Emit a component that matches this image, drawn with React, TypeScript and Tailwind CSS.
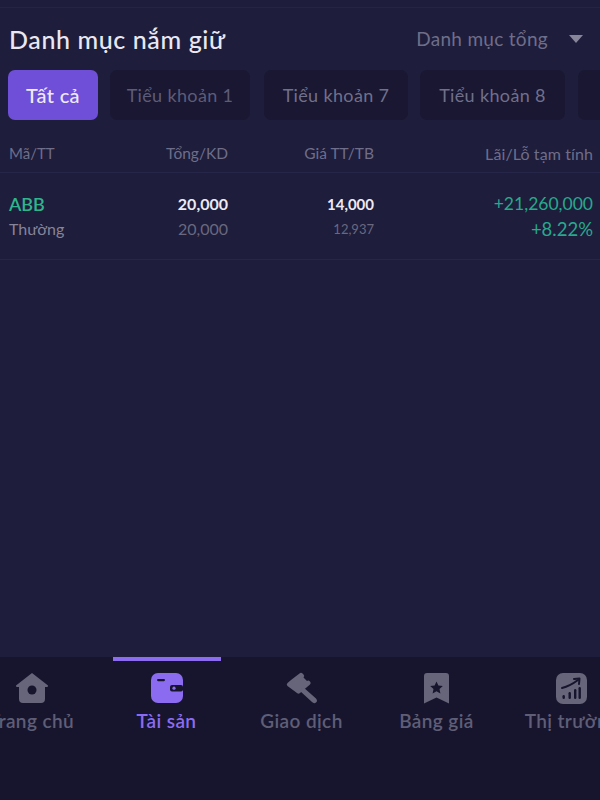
const font = { fontFamily: '"Lato", "Noto Sans", sans-serif' }

const tabs = ['Tiểu khoản 1', 'Tiểu khoản 7', 'Tiểu khoản 8']

function HomeIcon() {
  return (
    <svg width="34" height="32" viewBox="0 0 34 32">
      <path
        d="M17 1 L33 13.5 Q33.5 15 31.5 15 L30 15 L30 27 Q30 31 26 31 L8 31 Q4 31 4 27 L4 15 L2.5 15 Q0.5 15 1 13.5 Z"
        fill="#66657a"
      />
      <circle cx="17" cy="18" r="4.5" fill="#17152e" />
    </svg>
  )
}

function WalletIcon() {
  return (
    <svg width="32" height="30" viewBox="0 0 32 30">
      <rect x="0" y="0" width="32" height="30" rx="7" fill="#8b6cf0" />
      <rect x="6" y="6" width="8" height="2.2" rx="1.1" fill="#17152e" />
      <rect x="19" y="12" width="13" height="6.5" rx="2" fill="#17152e" />
      <circle cx="23" cy="15.2" r="1.6" fill="#8b6cf0" />
    </svg>
  )
}

function GavelIcon() {
  return (
    <svg width="32" height="32" viewBox="0 0 32 32">
      <path
        d="M13.5 1.5 Q15 0 16.5 1.5 L17.5 2.5 Q19 4 17.5 5.5 L18 6 L21 9 Q22.5 8 24 9.5 Q25.5 11 24 12.5 L14 21 Q12.5 22.5 11 21 L1.5 14 Q0 12.5 1.5 11 L5 8 Z"
        fill="#66657a"
      />
      <path d="M17 15 L30 26.5 Q32 29 30 30.5 Q28 32 26 30 L14 19 Z" fill="#66657a" />
    </svg>
  )
}

function BookmarkIcon() {
  return (
    <svg width="25" height="31" viewBox="0 0 25 31">
      <path
        d="M3 0 L22 0 Q25 0 25 3 L25 30.5 L12.5 24.5 L0 30.5 L0 3 Q0 0 3 0 Z"
        fill="#66657a"
      />
      <path
        d="M12.5 8.5 L14.4 12.6 L18.8 13.1 L15.5 16.1 L16.4 20.5 L12.5 18.3 L8.6 20.5 L9.5 16.1 L6.2 13.1 L10.6 12.6 Z"
        fill="#17152e"
      />
    </svg>
  )
}

function ChartIcon() {
  return (
    <svg width="31" height="31" viewBox="0 0 31 31">
      <rect x="0" y="0" width="31" height="31" rx="7" fill="#66657a" />
      <path d="M6 15 Q14 13 22 7" stroke="#17152e" strokeWidth="2" fill="none" strokeLinecap="round" />
      <path d="M18 6 L23.5 5.5 L23 11" stroke="#17152e" strokeWidth="2" fill="none" strokeLinecap="round" strokeLinejoin="round" />
      <rect x="6.5" y="22" width="2.4" height="4" rx="1.2" fill="#17152e" />
      <rect x="12.5" y="19" width="2.4" height="7" rx="1.2" fill="#17152e" />
      <rect x="18" y="16" width="2.4" height="10" rx="1.2" fill="#17152e" />
      <rect x="22.5" y="14" width="2.4" height="12" rx="1.2" fill="#17152e" />
    </svg>
  )
}

const navItems = [
  { label: 'Trang chủ', icon: <HomeIcon /> },
  { label: 'Tài sản', icon: <WalletIcon />, active: true },
  { label: 'Giao dịch', icon: <GavelIcon /> },
  { label: 'Bảng giá', icon: <BookmarkIcon /> },
  { label: 'Thị trường', icon: <ChartIcon /> },
]

export default function App() {
  return (
    <div className="w-[600px] h-[800px] overflow-hidden flex flex-col bg-[#1e1d3b]" style={font}>
      <div className="h-[8px] border-b border-[#24234a]" />

      {/* Heading */}
      <div className="flex items-center justify-between h-[62px] pl-[9px] pr-[17px]">
        <h1 className="text-[25px] leading-[32px] font-medium text-[#e9e8f2] tracking-[0.6px]">Danh mục nắm giữ</h1>
        <div className="flex items-center gap-[21px] text-[19px] tracking-[0.3px] text-[#6f6e8a]">
          <span>Danh mục tổng</span>
          <span className="w-0 h-0 border-x-[7.5px] border-x-transparent border-t-[8px] border-t-[#86859a]" />
        </div>
      </div>

      {/* Account tabs */}
      <div className="flex h-[50px] overflow-hidden pl-[8px] text-[18px] tracking-[0.35px]">
        <div className="shrink-0 w-[90px] rounded-[7px] bg-[#6f4fd8] text-[#eeeaf9] text-[20px] font-medium flex items-center justify-center mr-[12px]">
          Tất cả
        </div>
        <div className="shrink-0 w-[140px] rounded-[7px] bg-[#191732] text-[#5d5c78] flex items-center justify-center mr-[14px]">
          {tabs[0]}
        </div>
        <div className="shrink-0 w-[144px] rounded-[7px] bg-[#191732] text-[#71708a] flex items-center justify-center mr-[12px]">
          {tabs[1]}
        </div>
        <div className="shrink-0 w-[145px] rounded-[7px] bg-[#191732] text-[#71708a] flex items-center justify-center mr-[13px]">
          {tabs[2]}
        </div>
        <div className="shrink-0 w-[30px] rounded-[7px] bg-[#191732]" />
      </div>

      {/* Table header */}
      <div className="mt-[15px] h-[38px] grid grid-cols-[100px_119px_146px_219px] items-center pl-[9px] text-[15.5px] text-[#6f6e8a] border-b border-[#26264a]">
        <span className="text-[15px]">Mã/TT</span>
        <span className="text-right">Tổng/KD</span>
        <span className="text-right">Giá TT/TB</span>
        <span className="text-right text-[16px] tracking-[0.1px]">Lãi/Lỗ tạm tính</span>
      </div>

      {/* Holding row */}
      <div className="h-[87px] grid grid-cols-[100px_119px_146px_219px] content-center gap-y-[1px] pt-[1px] pl-[9px] border-b border-[#26264a]">
        <span className="text-[18px] leading-[24px] font-semibold text-[#2fb58c]">ABB</span>
        <span className="text-[16px] leading-[24px] font-bold text-right text-[#eceaf4]">20,000</span>
        <span className="text-[15px] leading-[24px] font-bold text-right text-[#eceaf4]">14,000</span>
        <span className="text-[17.5px] leading-[24px] text-right text-[#27a98e]">+21,260,000</span>
        <span className="text-[16px] leading-[24px] text-[#85849a]">Thường</span>
        <span className="text-[16px] leading-[24px] text-right text-[#69687f]">20,000</span>
        <span className="text-[13px] leading-[24px] text-right text-[#69687f]">12,937</span>
        <span className="text-[18.5px] leading-[24px] text-right text-[#27a98e]">+8.22%</span>
      </div>

      <div className="flex-1" />

      {/* Bottom navigation */}
      <nav className="h-[143px] bg-[#17152e] flex -ml-[36px]">
        {navItems.map((item) => (
          <div key={item.label} className="shrink-0 w-[135px] flex flex-col items-center">
            <div className={item.active ? 'w-[108px] h-[4px] bg-[#8b6cf0]' : 'w-[108px] h-[4px]'} />
            <div className="h-[32px] mt-[11px] flex items-center justify-center">{item.icon}</div>
            <span
              className={
                item.active
                  ? 'mt-[4px] text-[19px] leading-[26px] font-semibold tracking-[0.4px] whitespace-nowrap text-[#8b6cf0]'
                  : 'mt-[4px] text-[19px] leading-[26px] font-semibold tracking-[0.4px] whitespace-nowrap text-[#5f5e76]'
              }
            >
              {item.label}
            </span>
          </div>
        ))}
      </nav>
    </div>
  )
}
